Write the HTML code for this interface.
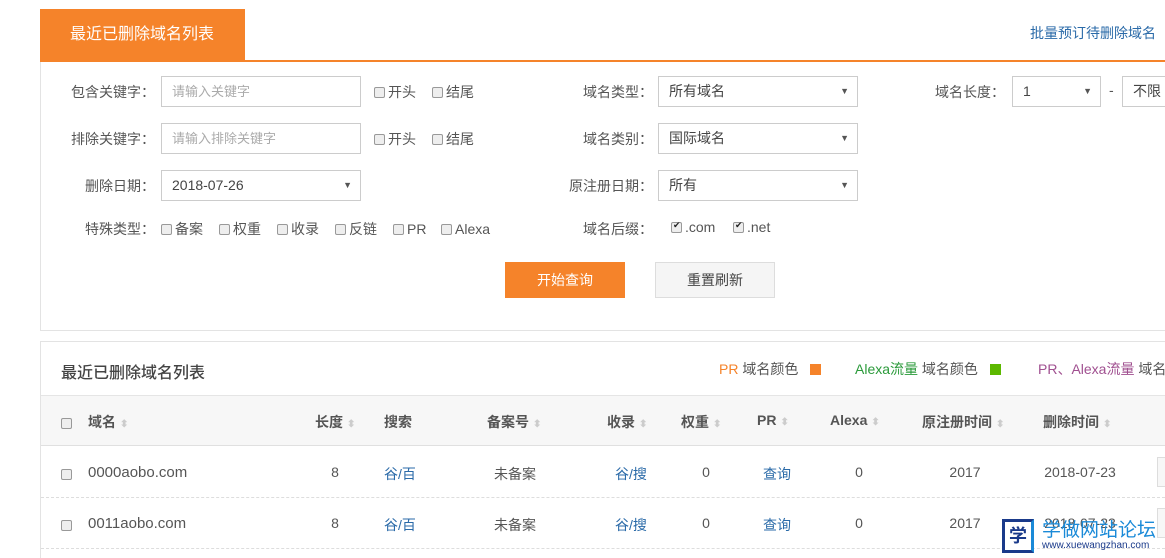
<!DOCTYPE html>
<html><head><meta charset="utf-8"><style>
*{box-sizing:border-box;margin:0;padding:0}
body{width:1165px;height:558px;overflow:hidden;background:#fff;font-family:"Liberation Sans","Noto Sans CJK SC",sans-serif;font-size:14px;color:#555;position:relative}
.a{position:absolute;white-space:nowrap}
.inp{position:absolute;height:31px;border:1px solid #ccc;background:#fff;padding-left:10px;line-height:29px;font-size:14px;color:#444}
.inp.ph{color:#aaa;font-size:13px}
.arr{position:absolute;right:8px;top:0;font-size:9px;color:#555}
.cb{display:inline-block;width:11px;height:11px;border:1px solid #999;border-radius:2px;background:#eee;vertical-align:-1px;margin-right:3px}
.cbk{background:#eee;position:relative}
.cbk:after{content:"✔";position:absolute;left:1px;top:-3px;font-size:9px;color:#222}
.it{display:inline-block;width:58px}
.lbl{position:absolute;text-align:right;width:120px;font-size:14px;color:#555}
.h{position:absolute;top:412px;font-weight:bold;color:#555;font-size:14px}
.s{color:#ccc;font-size:10px;margin-left:4px}
.c{position:absolute;text-align:center;font-size:14px;color:#555}
.lk{color:#2a6aa8}
</style></head><body>
<div class="a" style="left:40px;top:9px;width:205px;height:52px;background:#f5832a;color:#fff;font-size:16px;line-height:52px;padding-left:30px">最近已删除域名列表</div>
<div class="a" style="left:1030px;top:23px;color:#2a6aa8;font-size:14px">批量预订待删除域名</div>
<div class="a" style="left:40px;top:60px;width:1125px;height:2px;background:#f5832a"></div>
<div class="a" style="left:40px;top:62px;width:1125px;height:269px;border-left:1px solid #e3e3e3;border-bottom:1px solid #e3e3e3"></div>

<div class="lbl" style="left:35px;top:82px">包含关键字：</div>
<div class="inp ph" style="left:161px;top:76px;width:200px">请输入关键字</div>
<div class="a" style="left:374px;top:82px"><span class="it"><span class="cb"></span>开头</span><span class="cb"></span>结尾</div>
<div class="lbl" style="left:35px;top:129px">排除关键字：</div>
<div class="inp ph" style="left:161px;top:123px;width:200px">请输入排除关键字</div>
<div class="a" style="left:374px;top:129px"><span class="it"><span class="cb"></span>开头</span><span class="cb"></span>结尾</div>
<div class="lbl" style="left:35px;top:176px">删除日期：</div>
<div class="inp" style="left:161px;top:170px;width:200px">2018-07-26<span class="arr">▼</span></div>
<div class="lbl" style="left:35px;top:219px">特殊类型：</div>
<div class="a" style="left:161px;top:219px"><span class="it"><span class="cb"></span>备案</span><span class="it"><span class="cb"></span>权重</span><span class="it"><span class="cb"></span>收录</span><span class="it"><span class="cb"></span>反链</span><span class="it" style="width:48px"><span class="cb"></span>PR</span><span class="cb"></span>Alexa</div>

<div class="lbl" style="left:533px;top:82px">域名类型：</div>
<div class="inp" style="left:658px;top:76px;width:200px">所有域名<span class="arr">▼</span></div>
<div class="lbl" style="left:533px;top:129px">域名类别：</div>
<div class="inp" style="left:658px;top:123px;width:200px">国际域名<span class="arr">▼</span></div>
<div class="lbl" style="left:533px;top:176px">原注册日期：</div>
<div class="inp" style="left:658px;top:170px;width:200px">所有<span class="arr">▼</span></div>
<div class="lbl" style="left:533px;top:219px">域名后缀：</div>
<div class="a" style="left:671px;top:219px"><span class="it" style="width:62px"><span class="cb cbk"></span>.com</span><span class="cb cbk"></span>.net</div>

<div class="lbl" style="left:885px;top:82px">域名长度：</div>
<div class="inp" style="left:1012px;top:76px;width:89px">1<span class="arr">▼</span></div>
<div class="a" style="left:1109px;top:82px">-</div>
<div class="inp" style="left:1122px;top:76px;width:60px">不限</div>

<div class="a" style="left:505px;top:262px;width:120px;height:36px;background:#f5832a;color:#fff;text-align:center;line-height:36px">开始查询</div>
<div class="a" style="left:655px;top:262px;width:120px;height:36px;background:#f5f5f5;border:1px solid #ddd;color:#444;text-align:center;line-height:34px">重置刷新</div>

<div class="a" style="left:40px;top:341px;width:1125px;height:217px;border-left:1px solid #e3e3e3;border-top:1px solid #e3e3e3"></div>
<div class="a" style="left:61px;top:359px;font-size:16px;color:#444;font-weight:500">最近已删除域名列表</div>
<div class="a" style="left:719px;top:359px;font-size:14px"><span style="color:#f5832a">PR</span> 域名颜色 <span style="display:inline-block;width:11px;height:11px;background:#f5832a;margin-left:8px;vertical-align:-1px"></span></div>
<div class="a" style="left:855px;top:359px;font-size:14px"><span style="color:#2a9a3a">Alexa流量</span> 域名颜色 <span style="display:inline-block;width:11px;height:11px;background:#5cb800;margin-left:8px;vertical-align:-1px"></span></div>
<div class="a" style="left:1038px;top:359px;font-size:14px"><span style="color:#a05090">PR、Alexa流量</span> 域名颜色</div>
<div class="a" style="left:41px;top:395px;width:1124px;height:51px;background:#f7f7f7;border-top:1px solid #e5e5e5;border-bottom:1px solid #e0e0e0"></div>
<div class="a" style="left:61px;top:415px"><span class="cb"></span></div>
<div class="h" style="left:88px">域名<span class="s">⬍</span></div>
<div class="h" style="left:315px">长度<span class="s">⬍</span></div>
<div class="h" style="left:384px">搜索</div>
<div class="h" style="left:487px">备案号<span class="s">⬍</span></div>
<div class="h" style="left:607px">收录<span class="s">⬍</span></div>
<div class="h" style="left:681px">权重<span class="s">⬍</span></div>
<div class="h" style="left:757px">PR<span class="s">⬍</span></div>
<div class="h" style="left:830px">Alexa<span class="s">⬍</span></div>
<div class="h" style="left:922px">原注册时间<span class="s">⬍</span></div>
<div class="h" style="left:1043px">删除时间<span class="s">⬍</span></div>

<div class="a" style="left:41px;top:497px;width:1124px;border-top:1px dashed #ddd"></div>
<div class="a" style="left:41px;top:548px;width:1124px;border-top:1px dashed #ddd"></div>

<div class="a" style="left:61px;top:466px"><span class="cb"></span></div>
<div class="a" style="left:88px;top:464px;font-size:15px">0000aobo.com</div>
<div class="c" style="left:325px;top:464px;width:20px">8</div>
<div class="c lk" style="left:370px;top:464px;width:60px">谷/百</div>
<div class="c" style="left:485px;top:464px;width:60px">未备案</div>
<div class="c lk" style="left:601px;top:464px;width:60px">谷/搜</div>
<div class="c" style="left:696px;top:464px;width:20px">0</div>
<div class="c lk" style="left:752px;top:464px;width:50px">查询</div>
<div class="c" style="left:849px;top:464px;width:20px">0</div>
<div class="c" style="left:940px;top:464px;width:50px">2017</div>
<div class="c" style="left:1035px;top:464px;width:90px">2018-07-23</div>
<div class="a" style="left:1157px;top:457px;width:10px;height:30px;border:1px solid #ddd;background:#f7f7f7"></div>

<div class="a" style="left:61px;top:517px"><span class="cb"></span></div>
<div class="a" style="left:88px;top:515px;font-size:15px">0011aobo.com</div>
<div class="c" style="left:325px;top:515px;width:20px">8</div>
<div class="c lk" style="left:370px;top:515px;width:60px">谷/百</div>
<div class="c" style="left:485px;top:515px;width:60px">未备案</div>
<div class="c lk" style="left:601px;top:515px;width:60px">谷/搜</div>
<div class="c" style="left:696px;top:515px;width:20px">0</div>
<div class="c lk" style="left:752px;top:515px;width:50px">查询</div>
<div class="c" style="left:849px;top:515px;width:20px">0</div>
<div class="c" style="left:940px;top:515px;width:50px">2017</div>
<div class="c" style="left:1035px;top:515px;width:90px">2018-07-23</div>
<div class="a" style="left:1157px;top:508px;width:10px;height:30px;border:1px solid #ddd;background:#f7f7f7"></div>

<div class="a" style="left:1002px;top:519px;width:32px;height:34px;border:3px solid #1a3a8a;border-right-color:#1a8ad8;background:#fff;color:#1a3a8a;font-size:18px;text-align:center;line-height:28px;font-weight:bold">学</div>
<div class="a" style="left:1042px;top:515px;color:#1a8ad8;font-size:19px;letter-spacing:0px">学做网站论坛</div>
<div class="a" style="left:1042px;top:540px;color:#1a3a8a;font-size:10px">www.xuewangzhan.com</div>
</body></html>
